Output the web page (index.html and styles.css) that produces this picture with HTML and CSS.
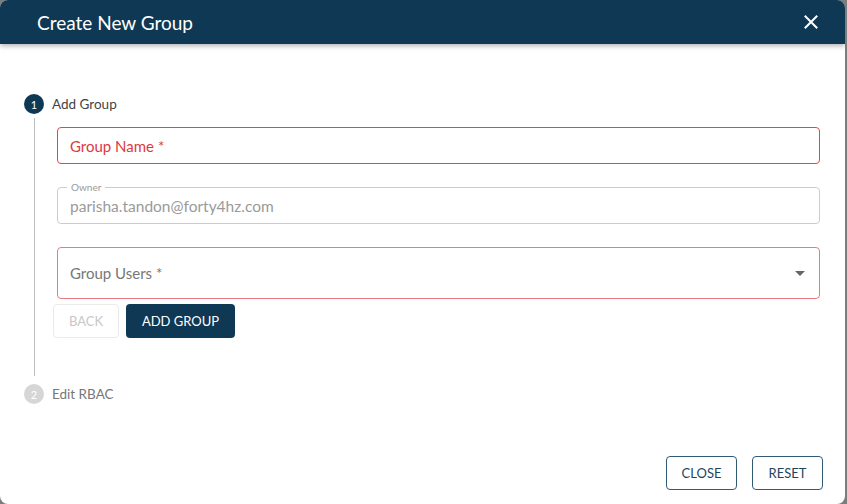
FILE: index.html
```html
<!DOCTYPE html>
<html>
<head>
    <title>Create New Group</title>
    <link rel="stylesheet" href="styles.css">
</head>
<body>
    <div class="dialog">
        <div class="dialog-header">
            <h2>Create New Group</h2>
            <svg class="close-icon" width="14" height="14" viewBox="0 0 14 14">
                <path d="M1.5 1.5 L12.5 12.5 M12.5 1.5 L1.5 12.5" stroke="#fff" stroke-width="2" stroke-linecap="square"/>
            </svg>
        </div>

        <div class="dialog-body">
            <div class="step">
                <span class="step-num active">1</span>
                <span class="step-label">Add Group</span>
            </div>
            <div class="step-content">
                <div class="field error">
                    <span class="placeholder red">Group Name *</span>
                </div>
                <div class="field outlined">
                    <span class="legend">Owner</span>
                    <span class="value">parisha.tandon@forty4hz.com</span>
                </div>
                <div class="field error tall">
                    <span class="placeholder">Group Users *</span>
                    <svg class="arrow" width="10" height="5" viewBox="0 0 10 5">
                        <path d="M0 0 L10 0 L5 5 Z" fill="#666"/>
                    </svg>
                </div>
                <div class="step-actions">
                    <button class="btn-back" disabled>BACK</button>
                    <button class="btn-primary">ADD GROUP</button>
                </div>
            </div>
            <div class="step">
                <span class="step-num">2</span>
                <span class="step-label muted">Edit RBAC</span>
            </div>
        </div>

        <div class="dialog-footer">
            <button class="btn-outline">CLOSE</button>
            <button class="btn-outline">RESET</button>
        </div>
    </div>
</body>
</html>
```

FILE: styles.css
```css
body {
    margin: 0;
    background: #7c7c7c;
    font-family: Lato, "Noto Sans", sans-serif;
}
.dialog {
    width: 845px;
    height: 504px;
    background: #fff;
    border-radius: 8px;
    overflow: hidden;
    display: flex;
    flex-direction: column;
}
.dialog-header {
    height: 44px;
    background: #0f3854;
    display: flex;
    align-items: center;
    justify-content: space-between;
    padding: 0 27px 0 37px;
    box-shadow: 0 2px 5px rgba(0,0,0,0.3);
    position: relative;
}
.dialog-header h2 {
    margin: 0;
    color: #fff;
    font-size: 19px;
    font-weight: 400;
}
.dialog-body {
    flex: 1;
    padding: 50px 25px 0 24px;
}
.step {
    display: flex;
    align-items: center;
    gap: 8px;
    height: 20px;
}
.step-num {
    width: 20px;
    height: 20px;
    border-radius: 50%;
    background: #d6d6d6;
    color: #fff;
    font-size: 11px;
    display: flex;
    align-items: center;
    justify-content: center;
}
.step-num.active {
    background: #0f3854;
}
.step-label {
    font-size: 13.5px;
    color: #444;
}
.step-label.muted {
    color: #777;
}
.step-content {
    margin: 4px 0 8px 10px;
    border-left: 1px solid #bdbdbd;
    padding: 9px 0 38px 22px;
    display: flex;
    flex-direction: column;
}
.field {
    height: 37px;
    box-sizing: border-box;
    border: 1px solid #ccc;
    border-radius: 4px;
    display: flex;
    align-items: center;
    padding: 0 12px;
    position: relative;
    margin-bottom: 23px;
}
.field.error {
    border-color: #e0474c;
}
.field.tall {
    height: 52px;
    margin-bottom: 5px;
    justify-content: space-between;
    border-color: #e77b7e;
}
.placeholder {
    font-size: 15px;
    color: #777;
}
.placeholder.red {
    color: #dc3a3f;
}
.value {
    font-size: 15.5px;
    color: #9a9a9a;
}
.legend {
    position: absolute;
    top: -7px;
    left: 9px;
    padding: 0 4px;
    background: #fff;
    font-size: 10px;
    color: #9a9a9a;
}
.arrow {
    margin-right: 2px;
}
.step-actions {
    display: flex;
    gap: 7px;
    margin-left: -4px;
}
button {
    font-family: Lato, "Noto Sans", sans-serif;
    font-size: 13px;
    height: 34px;
    border-radius: 4px;
    cursor: pointer;
}
.btn-back {
    width: 66px;
    background: #fff;
    border: 1px solid #ebebeb;
    color: #c8c8c8;
}
.btn-primary {
    width: 109px;
    background: #0f3854;
    border: none;
    color: #fff;
}
.dialog-footer {
    display: flex;
    justify-content: flex-end;
    gap: 15px;
    padding: 0 22px 14px 0;
}
.btn-outline {
    width: 71px;
    background: #fff;
    border: 1px solid #335a75;
    color: #1e4560;
}
```
